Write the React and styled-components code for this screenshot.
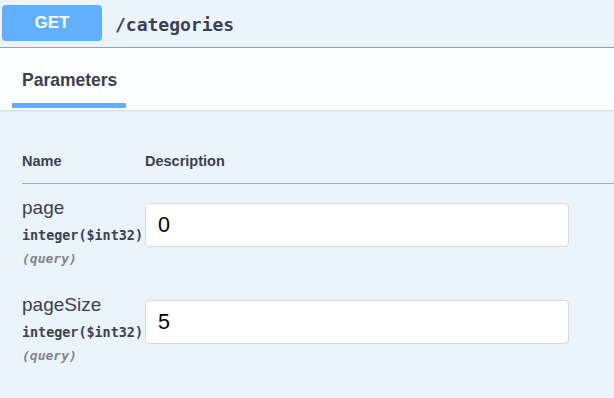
import React from "react";
import styled, { createGlobalStyle } from "styled-components";

const GlobalStyle = createGlobalStyle`
  html, body {
    margin: 0;
    padding: 0;
    background: #ebf3fb;
  }
  body {
    font-family: "Liberation Sans", Arial, sans-serif;
    color: #3b4151;
  }
`;

const Panel = styled.div`
  width: 614px;
  height: 398px;
  background: #ebf3fb;
  overflow: hidden;
`;

const Summary = styled.div`
  height: 47px;
  display: flex;
  align-items: center;
  padding-left: 2px;
  border-bottom: 1px solid #61affe;
`;

const Method = styled.div`
  width: 100px;
  height: 36px;
  margin-top: -1px;
  border-radius: 4px;
  background: #61affe;
  color: #fff;
  font-size: 17px;
  font-weight: bold;
  display: flex;
  align-items: center;
  justify-content: center;
`;

const Path = styled.span`
  margin-left: 13px;
  margin-top: 2px;
  font-family: "DejaVu Sans Mono", monospace;
  font-size: 18px;
  font-weight: bold;
  color: #3b4151;
`;

const TabBar = styled.div`
  height: 62px;
  background: rgba(255, 255, 255, 0.85);
  box-shadow: 0 1px 2px rgba(0, 0, 0, 0.1);
  display: flex;
  align-items: flex-end;
  padding-left: 12px;
`;

const Tab = styled.div`
  width: 114px;
  height: 60px;
  box-sizing: border-box;
  padding-left: 10px;
  padding-top: 22px;
  font-size: 17.5px;
  line-height: 20px;
  font-weight: bold;
  border-bottom: ${(p) => (p.active ? "5px solid #61affe" : "none")};
  margin-bottom: 2px;
`;

const Table = styled.div`
  padding-left: 22px;
`;

const HeadRow = styled.div`
  display: flex;
  height: 74px;
  box-sizing: border-box;
  padding-top: 43px;
  border-bottom: 1px solid #a7adb8;
  font-size: 14.5px;
  line-height: 17px;
  font-weight: bold;
`;

const Cell = styled.div`
  width: ${(p) => p.w || "auto"};
  flex-shrink: 0;
`;

const Row = styled.div`
  display: flex;
  padding: 13px 0 11px;
`;

const ParamName = styled.div`
  font-size: 19px;
  line-height: 22px;
  white-space: nowrap;
`;

const ParamType = styled.div`
  margin-top: 5px;
  font-family: "DejaVu Sans Mono", monospace;
  font-size: 13.4px;
  line-height: 23px;
  font-weight: bold;
  white-space: nowrap;
`;

const ParamIn = styled.div`
  font-family: "DejaVu Sans Mono", monospace;
  font-size: 13px;
  line-height: 23px;
  font-style: italic;
  font-weight: 600;
  color: #858585;
`;

const Input = styled.input`
  display: block;
  width: 424px;
  height: 44px;
  box-sizing: border-box;
  margin-top: 6px;
  padding: 0 12px;
  border: 1px solid #d9d9d9;
  border-radius: 4px;
  background: #fff;
  font-family: "Liberation Sans", Arial, sans-serif;
  font-size: 21.5px;
  color: #000;
  outline: none;
`;

const params = [
  { name: "page", type: "integer", format: "$int32", in: "query", value: "0" },
  { name: "pageSize", type: "integer", format: "$int32", in: "query", value: "5" },
];

export default function App() {
  return (
    <>
      <GlobalStyle />
      <Panel>
        <Summary>
          <Method>GET</Method>
          <Path>/categories</Path>
        </Summary>
        <TabBar>
          <Tab active>Parameters</Tab>
        </TabBar>
        <Table>
          <HeadRow>
            <Cell w="123px">Name</Cell>
            <Cell>Description</Cell>
          </HeadRow>
          {params.map((p) => (
            <Row key={p.name}>
              <Cell w="123px">
                <ParamName>{p.name}</ParamName>
                <ParamType>
                  {p.type}({p.format})
                </ParamType>
                <ParamIn>({p.in})</ParamIn>
              </Cell>
              <Cell>
                <Input defaultValue={p.value} />
              </Cell>
            </Row>
          ))}
        </Table>
      </Panel>
    </>
  );
}
